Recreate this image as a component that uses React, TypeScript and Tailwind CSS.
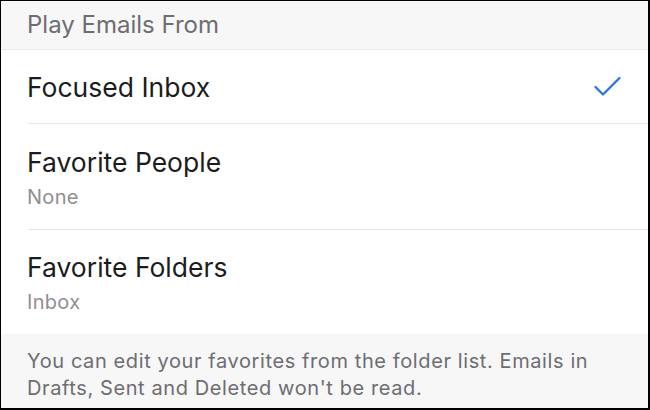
const font = { fontFamily: "Inter, 'Liberation Sans', sans-serif" };

function Check() {
  return (
    <svg width="28" height="24" viewBox="0 0 28 24" fill="none" className="shrink-0">
      <path
        d="M1.5 12 L9 19.5 L25.5 3"
        stroke="#2d74d4"
        strokeWidth="2.3"
        strokeLinecap="round"
        strokeLinejoin="round"
      />
    </svg>
  );
}

function Row({
  title,
  sub,
  checked,
  className,
}: {
  title: string;
  sub?: string;
  checked?: boolean;
  className: string;
}) {
  return (
    <div className={`flex items-center pl-[26px] pr-[26px] ${className}`}>
      <div className="flex flex-1 flex-col gap-[6px]">
        <span className="text-[26.5px] leading-[34px] text-[#1c1c1e]">{title}</span>
        {sub && (
          <span className="text-[20px] leading-[24px] tracking-[0.3px] text-[#8e8e93]">
            {sub}
          </span>
        )}
      </div>
      {checked && <Check />}
    </div>
  );
}

export default function App() {
  return (
    <div
      style={font}
      className="flex h-[410px] w-[650px] flex-col border-t border-l border-r-2 border-b-2 border-black bg-white"
    >
      <div className="flex h-[49px] shrink-0 items-center border-b border-[#e9e9e9] bg-[#f7f7f7] pl-[26px]">
        <span className="text-[24px] leading-6 text-[#6d6d72]">Play Emails From</span>
      </div>
      <Row title="Focused Inbox" checked className="h-[73px] shrink-0" />
      <div className="ml-[27px] h-px shrink-0 bg-[#e6e6e6]" />
      <Row title="Favorite People" sub="None" className="h-[105px] shrink-0" />
      <div className="ml-[27px] h-px shrink-0 bg-[#e6e6e6]" />
      <Row title="Favorite Folders" sub="Inbox" className="h-[104px] shrink-0" />
      <div className="flex-1 bg-[#f7f7f7] pl-[26px] pr-2 pt-[14px]">
        <p className="whitespace-nowrap text-[20px] leading-[27px] tracking-[0.6px] text-[#6d6d72]">
          You can edit your favorites from the folder list. Emails in
          <br />
          Drafts, Sent and Deleted won't be read.
        </p>
      </div>
    </div>
  );
}
